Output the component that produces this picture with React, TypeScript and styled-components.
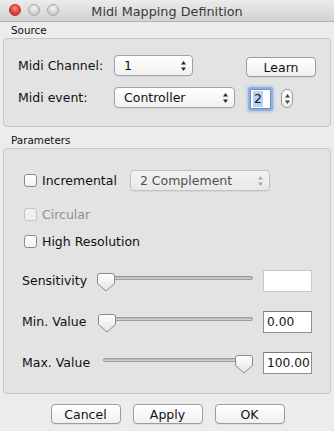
import styled, { createGlobalStyle } from "styled-components"

const Global = createGlobalStyle`
    html, body {
        margin: 0;
        padding: 0;
        background: #ececec;
    }
    body {
        font-family: "DejaVu Sans", "Liberation Sans", sans-serif;
        color: #111;
    }
`

function Arrows({ color = "#2a2a2a" }: { color?: string }) {
    return (
        <svg width="7" height="12" viewBox="0 0 7 12">
            <path d="M3.5 1 L6 4.6 H1 Z" fill={color} />
            <path d="M1 7.4 H6 L3.5 11 Z" fill={color} />
        </svg>
    )
}

function Thumb() {
    return (
        <svg width="18" height="19" viewBox="0 0 18 19">
            <defs>
                <linearGradient id="tg" x1="0" y1="0" x2="0" y2="1">
                    <stop offset="0" stopColor="#ffffff" />
                    <stop offset="1" stopColor="#e4e4e4" />
                </linearGradient>
            </defs>
            <path d="M3 0.5 H15 A2.5 2.5 0 0 1 17.5 3 V10.5 L9 18 L0.5 10.5 V3 A2.5 2.5 0 0 1 3 0.5 Z"
                fill="url(#tg)" stroke="#8a8a8a" strokeWidth="1" />
        </svg>
    )
}

function Slider({ value }: { value: number }) {
    return (
        <SliderBox>
            <Track />
            <ThumbHolder style={{ left: `calc(${value}% - ${value * 0.18}px)` }}>
                <Thumb />
            </ThumbHolder>
        </SliderBox>
    )
}

export default function App() {
    return (
        <>
            <Global />
            <Window>
                <TitleBar>
                    <Lights>
                        <Light $red />
                        <Light />
                        <Light />
                    </Lights>
                    <Title>Midi Mapping Definition</Title>
                </TitleBar>

                <SectionLabel>Source</SectionLabel>
                <GroupBox $height={89} $top={16}>
                    <FormRow>
                        <Label $width={96}>Midi Channel:</Label>
                        <Popup $width={79}>
                            <span>1</span>
                            <Arrows />
                        </Popup>
                        <Button $width={70} style={{ marginLeft: 53, marginTop: 2 }}>Learn</Button>
                    </FormRow>
                    <FormRow style={{ marginTop: 11 }}>
                        <Label $width={96}>Midi event:</Label>
                        <Popup $width={121}>
                            <span>Controller</span>
                            <Arrows />
                        </Popup>
                        <FocusField>
                            <Selected>2</Selected>
                        </FocusField>
                        <Stepper>
                            <Arrows color="#444" />
                        </Stepper>
                    </FormRow>
                </GroupBox>

                <SectionLabel $gap={5}>Parameters</SectionLabel>
                <GroupBox $height={246} $top={21}>
                    <CheckRow>
                        <CheckBox />
                        <CheckText>Incremental</CheckText>
                        <Popup $width={140} $disabled style={{ marginLeft: 13 }}>
                            <span>2 Complement</span>
                            <Arrows color="#a8a8a8" />
                        </Popup>
                    </CheckRow>
                    <CheckRow style={{ marginTop: 13 }}>
                        <CheckBox $disabled />
                        <CheckText $disabled>Circular</CheckText>
                    </CheckRow>
                    <CheckRow style={{ marginTop: 6 }}>
                        <CheckBox />
                        <CheckText>High Resolution</CheckText>
                    </CheckRow>

                    <SliderRow style={{ marginTop: 18 }}>
                        <Label $width={75}>Sensitivity</Label>
                        <Slider value={0} />
                        <NumberField $empty />
                    </SliderRow>
                    <SliderRow>
                        <Label $width={76}>Min. Value</Label>
                        <Slider value={0} />
                        <NumberField>0.00</NumberField>
                    </SliderRow>
                    <SliderRow>
                        <Label $width={81}>Max. Value</Label>
                        <Slider value={100} />
                        <NumberField>100.00</NumberField>
                    </SliderRow>
                </GroupBox>

                <ButtonBar>
                    <Button $width={70}>Cancel</Button>
                    <Button $width={70}>Apply</Button>
                    <Button $width={70}>OK</Button>
                </ButtonBar>
            </Window>
        </>
    )
}

const Window = styled.div`
    width: 334px;
    height: 431px;
    display: flex;
    flex-direction: column;
    background: #ececec;
    overflow: hidden;
`
const TitleBar = styled.div`
    height: 22px;
    flex: none;
    position: relative;
    display: flex;
    align-items: center;
    justify-content: center;
    background: linear-gradient(#ebebeb, #d2d2d2);
    border-bottom: 1px solid #b2b2b2;
    box-sizing: border-box;
`
const Lights = styled.div`
    position: absolute;
    left: 9px;
    top: 4px;
    display: flex;
    gap: 7px;
`
const Light = styled.div<{ $red?: boolean }>`
    width: 12px;
    height: 12px;
    border-radius: 50%;
    box-sizing: border-box;
    border: 1px solid ${p => p.$red ? "#b23a30" : "#a9a9a9"};
    background: ${p => p.$red
        ? "radial-gradient(circle at 50% 35%, #ff9a8e 0%, #e5493d 45%, #b8281e 100%)"
        : "radial-gradient(circle at 50% 35%, #f4f4f4 0%, #d4d4d4 55%, #b9b9b9 100%)"};
`
const Title = styled.div`
    font-size: 12.8px;
    color: #3a3a3a;
    margin-top: 1px;
`
const SectionLabel = styled.div<{ $gap?: number }>`
    flex: none;
    height: 16px;
    box-sizing: border-box;
    padding: 2px 0 0 11px;
    margin-top: ${p => p.$gap ?? 0}px;
    font-size: 10.4px;
    color: #111;
`
const GroupBox = styled.div<{ $height: number, $top: number }>`
    flex: none;
    margin: 0 3px;
    height: ${p => p.$height}px;
    box-sizing: border-box;
    border: 1px solid #c6c6c6;
    border-radius: 4px;
    background: #e3e3e3;
    padding: ${p => p.$top}px 18px 0 14px;
    display: flex;
    flex-direction: column;
`
const FormRow = styled.div`
    display: flex;
    align-items: flex-start;
    height: 21px;
`
const Label = styled.div<{ $width: number }>`
    width: ${p => p.$width}px;
    flex: none;
    font-size: 12.5px;
    line-height: 22px;
    color: #111;
    white-space: nowrap;
`
const Popup = styled.div<{ $width: number, $disabled?: boolean }>`
    width: ${p => p.$width}px;
    height: 21px;
    flex: none;
    box-sizing: border-box;
    display: flex;
    align-items: center;
    justify-content: space-between;
    padding: 0 5px 0 9px;
    border: 1px solid ${p => p.$disabled ? "#c2c2c2" : "#a2a2a2"};
    border-radius: 4px;
    background: ${p => p.$disabled ? "linear-gradient(#f2f2f2, #e9e9e9)" : "linear-gradient(#ffffff, #f1f1f1)"};
    box-shadow: 0 1px 0 rgba(0, 0, 0, 0.05);
    font-size: 12.5px;
    color: ${p => p.$disabled ? "#505050" : "#111"};
`
const Button = styled.div<{ $width: number }>`
    width: ${p => p.$width}px;
    height: 20px;
    flex: none;
    box-sizing: border-box;
    display: flex;
    align-items: center;
    justify-content: center;
    border: 1px solid #9c9c9c;
    border-radius: 4px;
    background: linear-gradient(#ffffff, #f0f0f0);
    box-shadow: 0 1px 0 rgba(0, 0, 0, 0.06);
    font-size: 12.5px;
    color: #111;
`
const FocusField = styled.div`
    width: 21px;
    height: 20px;
    margin: 2px 0 0 15px;
    box-sizing: border-box;
    border: 1px solid #7e8da6;
    background: #fff;
    box-shadow: 0 0 0 2px #8bb2e6, 0 0 3px 3px rgba(110, 160, 230, 0.45);
    border-radius: 1px;
    display: flex;
    align-items: center;
    padding-left: 2px;
    font-size: 12.5px;
`
const Selected = styled.span`
    background: #b4d3f7;
    padding: 0 1px;
    line-height: 16px;
`
const Stepper = styled.div`
    width: 12px;
    height: 19px;
    margin: 2px 0 0 10px;
    box-sizing: border-box;
    border: 1px solid #9a9a9a;
    border-radius: 6px;
    background: linear-gradient(#ffffff, #ececec);
    display: flex;
    align-items: center;
    justify-content: center;
`
const CheckRow = styled.div`
    display: flex;
    align-items: center;
    height: 21px;
    padding-left: 6px;
`
const CheckBox = styled.div<{ $disabled?: boolean }>`
    width: 13px;
    height: 13px;
    flex: none;
    box-sizing: border-box;
    border: 1px solid ${p => p.$disabled ? "#c3c3c3" : "#8c8c8c"};
    border-radius: 3px;
    background: ${p => p.$disabled ? "#efefef" : "linear-gradient(#ffffff, #f2f2f2)"};
`
const CheckText = styled.div<{ $disabled?: boolean }>`
    margin-left: 5px;
    font-size: 12.5px;
    color: ${p => p.$disabled ? "#8f8f8f" : "#111"};
    white-space: nowrap;
`
const SliderRow = styled.div`
    display: flex;
    align-items: flex-start;
    height: 22px;
    margin-top: 19px;
    padding-left: 4px;
`
const SliderBox = styled.div`
    flex: 1;
    height: 22px;
    position: relative;
`
const Track = styled.div`
    position: absolute;
    left: 0;
    right: 0;
    top: 6px;
    height: 4px;
    box-sizing: border-box;
    border-radius: 2px;
    border: 1px solid #9c9c9c;
    background: linear-gradient(#b0b0b0, #dadada);
`
const ThumbHolder = styled.div`
    position: absolute;
    top: 3px;
    width: 18px;
    height: 19px;
    display: flex;
`
const NumberField = styled.div<{ $empty?: boolean }>`
    width: 49px;
    height: 22px;
    flex: none;
    margin-left: 10px;
    box-sizing: border-box;
    border: 1px solid ${p => p.$empty ? "#c9c9c9" : "#8f8f8f"};
    border-top-color: ${p => p.$empty ? "#c4c4c4" : "#7c7c7c"};
    background: #fff;
    font-size: 12.2px;
    line-height: 20px;
    padding-left: 3px;
    color: #111;
    white-space: nowrap;
    overflow: hidden;
`
const ButtonBar = styled.div`
    display: flex;
    justify-content: center;
    gap: 12px;
    padding-top: 10px;
    padding-left: 1px;
`
